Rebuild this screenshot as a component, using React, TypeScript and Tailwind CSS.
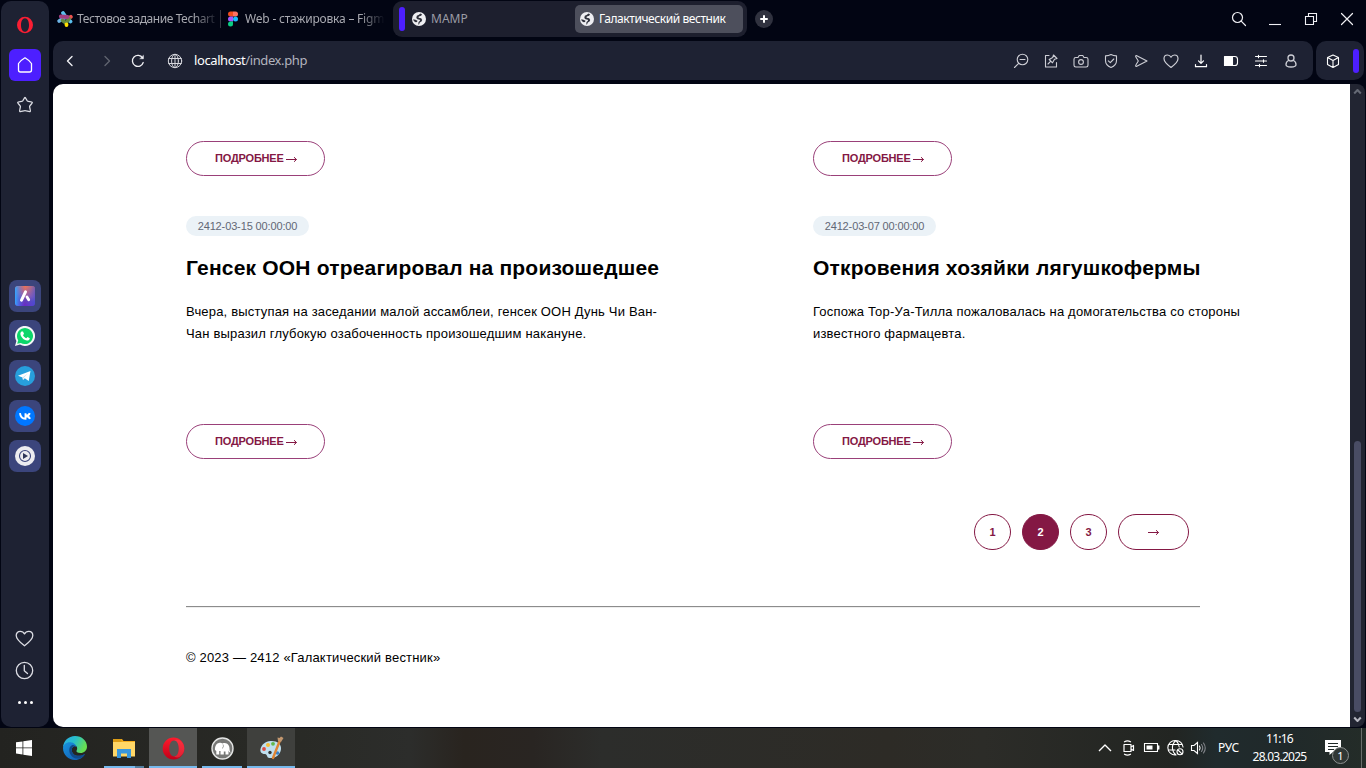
import type { ReactNode } from 'react';

const UI = "font-['Noto_Sans',sans-serif]";
const WEB = "font-['Liberation_Sans',Arial,sans-serif]";

function Icon({ size = 18, sw = 1.1, className = '', children }: { size?: number; sw?: number; className?: string; children: ReactNode }) {
  return (
    <svg width={size} height={size} viewBox={`0 0 ${size} ${size}`} fill="none" stroke="currentColor" strokeWidth={sw} strokeLinecap="round" strokeLinejoin="round" className={`block shrink-0 ${className}`}>
      {children}
    </svg>
  );
}

function OperaLogo({ size, flat }: { size: number; flat?: boolean }) {
  return (
    <svg width={size} height={size} viewBox="0 0 24 24" className="block shrink-0">
      <defs>
        <linearGradient id="operaRed" x1="0" y1="0" x2="0" y2="1">
          <stop offset="0" stopColor="#ff1b2d" />
          <stop offset="1" stopColor="#c00018" />
        </linearGradient>
      </defs>
      {flat ? (
        <path fill="#fa1e33" fillRule="evenodd" d="M12 3.8a8 8.2 0 1 0 0 16.4a8 8.2 0 1 0 0-16.4ZM12 5.200c2.600 0 4 3 4 6.800s-1.400 6.800-4 6.800s-4-3-4-6.800s1.400-6.800 4-6.800Z" />
      ) : (
        <>
          <path fill="url(#operaRed)" fillRule="evenodd" d="M12 .5a11.300 11.500 0 1 0 0 23a11.300 11.500 0 1 0 0-23ZM12.600 3.700c3 0 4.900 3.500 4.900 8.300s-1.900 8.300-4.900 8.300s-5-3.500-5-8.300s2-8.300 5-8.300Z" />
          <path fill="#ff4a55" d="M12.600 3.700c1.700-1.300 4-1.500 6-.2c3 2 4.700 5 4.700 8.500s-1.700 6.600-4.700 8.600c-2 1.200-4.300 1-6-.3c3 0 4.900-3.500 4.900-8.300s-1.900-8.300-4.900-8.300Z" opacity=".45" />
        </>
      )}
    </svg>
  );
}

function SiteGlobe() {
  return (
    <svg width="14" height="14" viewBox="0 0 14 14" className="block shrink-0">
      <circle cx="7" cy="7" r="7" fill="#eeeef2" />
      <path fill="#30323d" d="M8.500 1.400L10 2.200L9.200 3.800L6.800 4.500L6.500 5.800L9.200 6.200L10.200 8L9.500 9.500L7.800 10.500L7 12.500L6.300 12.500L6.500 10L8 8.800L7.800 7.800L5.500 7.200L4.300 6L4.800 3.800L6.500 3Z" />
      <path fill="#30323d" d="M1.200 7.200L3.500 7.800L5.500 8.800L5 10L3.800 10.300C2.200 9.500 1.300 8.500 1.200 7.200Z" />
    </svg>
  );
}

const G = 'text-[#cdced5]';
const tools: ReactNode[] = [
  <Icon className={G}><circle cx="10.500" cy="7.500" r="5.300" /><path d="M8 7.500h5M6.700 11.300L2.500 15.500" /></Icon>,
  <Icon className={G}><path d="M7 3.500H3.500v11.500h11V10.500" /><path d="M11.500 3L15 6.500L12.500 7.300L10.500 10.800L7.200 7.500L10.700 5.500ZM8.800 9.200L6 12" /></Icon>,
  <Icon className={G}><path d="M3.800 5.500H6l1.200-2h3.600l1.200 2h2.200c1 0 1.800.7 1.800 1.700v6.100c0 1-.8 1.700-1.800 1.700H3.800c-1 0-1.800-.7-1.800-1.700V7.200c0-1 .8-1.700 1.800-1.700Z" /><circle cx="9" cy="10" r="2.400" /></Icon>,
  <Icon className={G}><path d="M9 2.500c1.800 1.100 3.500 1.400 5.500 1.400v4.600c0 3.500-2.200 5.700-5.500 7c-3.300-1.300-5.500-3.500-5.500-7V3.900c2 0 3.700-.3 5.500-1.400Z" /><path d="M6.300 8.800L8.300 10.700L11.800 7" /></Icon>,
  <Icon className={G}><path d="M4.300 3.500L15 9L4.300 14.500C3.500 14.500 3.500 13.500 4 12.800L6.300 9L4 5.200C3.500 4.500 3.500 3.500 4.300 3.500Z" /></Icon>,
  <Icon className={G} sw={1.2}><path d="M9 15.500C5 12.500 2 10 2 6.800C2 4.500 3.600 3 5.500 3C7 3 8.300 3.800 9 5.200C9.700 3.800 11 3 12.500 3C14.400 3 16 4.500 16 6.800C16 10 13 12.500 9 15.500Z" /></Icon>,
  <Icon className="text-white" sw={1.2}><path d="M9 3v8M6.500 8.800L9 11.300L11.500 8.800M3.500 12.500v2.200h11v-2.200" /></Icon>,
  <Icon className="text-white"><rect x="2.500" y="4.500" width="8" height="9" fill="currentColor" /><path d="M10.500 4.500h2.300c1.800 0 2.700 1.300 2.700 2.800v3.400c0 1.500-.9 2.800-2.700 2.800H10.500" /></Icon>,
  <Icon className="text-white" sw={1.1}><path d="M3.500 4.500h11M3.500 9h11M3.500 13.500h11M6.500 3.300v2.400M11.500 7.800v2.400M7.500 12.300v2.400" /></Icon>,
  <Icon className={G} sw={1.3}><circle cx="9" cy="6" r="3" /><path d="M6.800 8.300C5 9.300 4 10.800 4 12.500c0 1.700 1.600 2.500 5 2.500s5-.8 5-2.500c0-1.700-1-3.200-2.800-4.200" /></Icon>,
];

function Messenger({ children }: { children: ReactNode }) {
  return (
    <div className="flex size-8 items-center justify-center rounded-lg bg-[#3b457c]">
      <svg width="20" height="20" viewBox="0 0 20 20">{children}</svg>
    </div>
  );
}

function Sidebar() {
  return (
    <aside className="ml-px mt-px flex h-[726px] w-12 shrink-0 flex-col items-center rounded-[10px] bg-[#1e2233] text-[#dcdde4]">
      <div className="mt-3 flex size-6 items-center justify-center"><OperaLogo size={24} flat /></div>
      <div className="mt-3 flex size-8 items-center justify-center rounded-md bg-[#4d1fff] text-white">
        <Icon sw={1.3}><path d="M9 1.800C6.500 3.300 4 5.300 2.500 7.500v6.500c0 1.200.7 2 2 2h9c1.300 0 2-.8 2-2V7.500C14 5.300 11.500 3.300 9 1.800Z" /></Icon>
      </div>
      <div className="mt-[15px]"><Icon sw={1.3}><path d="M9 1.500C9.700 1.500 10.600 4.300 11.400 5C12.500 5.700 15.800 5.600 16.300 6.400C16.600 7.300 13.900 9.200 13.600 10.400C13.500 11.700 14.900 14.800 14.200 15.500C13.400 16.100 10.500 14.700 9 14.700C7.500 14.700 4.600 16.100 3.800 15.500C3.100 14.800 4.500 11.700 4.400 10.400C4.100 9.200 1.400 7.300 1.700 6.400C2.200 5.600 5.500 5.700 6.600 5C7.400 4.300 8.300 1.500 9 1.500Z" /></Icon></div>
      <div className="mt-[166px] flex flex-col gap-2">
        <Messenger>
          <defs>
            <linearGradient id="aria" x1=".6" y1="0" x2=".4" y2="1"><stop offset="0" stopColor="#f47650" /><stop offset=".45" stopColor="#a55fa0" /><stop offset=".7" stopColor="#6440b8" /><stop offset="1" stopColor="#6a25c8" /></linearGradient>
            <linearGradient id="ariaSide" x1="0" x2="1"><stop offset="0" stopColor="#35a6ff" /><stop offset=".5" stopColor="#5060e0" stopOpacity="0" /><stop offset="1" stopColor="#4050d8" stopOpacity=".7" /></linearGradient>
          </defs>
          <rect width="20" height="20" rx="3" fill="url(#aria)" />
          <rect width="20" height="20" rx="3" fill="url(#ariaSide)" />
          <path d="M6.500 14.200L10.500 5.800" stroke="#fff" strokeWidth="3" strokeLinecap="round" /><path d="M12 11L13.700 13.800" stroke="#fff" strokeWidth="2.800" strokeLinecap="round" />
        </Messenger>
        <Messenger>
          <path d="M0 20L1.400 15A10 10 0 1 1 5 18.600Z" fill="#f4f6f7" />
          <path d="M2.200 17.800L3.200 14.300A8 8 0 1 1 5.800 16.900Z" fill="#0cd66a" />
          <path d="M6.500 5.500L8 5.400L9 7.800L8 9.200C8.800 10.700 9.900 11.600 11.300 12.200L12.500 11L14.800 12.200C14.700 14 13.300 14.700 12 14.600C8.800 14.200 5.800 11 5.400 8C5.300 7 5.800 6 6.500 5.500Z" fill="#fff" />
        </Messenger>
        <Messenger>
          <circle cx="10" cy="10" r="10" fill="#279fdc" />
          <path d="M3 9.800L15.500 5L13.700 15L9.800 12.300L8 14L7.500 11.400Z" fill="#fff" />
          <path d="M7.500 11.400L13 7.200L8.500 12L8 14Z" fill="#c5dff0" />
        </Messenger>
        <Messenger>
          <circle cx="10" cy="10" r="10" fill="#0077ff" />
          <path d="M5 7.200C5.400 10.800 6.800 12.800 10.500 12.800V7.200M14.800 7.200C14.200 8.800 12.600 9.900 10.700 10C12.700 10.200 14.400 11.300 15 12.800" fill="none" stroke="#fff" strokeWidth="1.900" />
        </Messenger>
        <Messenger>
          <circle cx="10" cy="10" r="10" fill="#ececf0" />
          <circle cx="10" cy="10" r="5.500" fill="none" stroke="#3b457c" strokeWidth="1.100" />
          <path d="M8 7L13 10L8 13Z" fill="#2e3659" />
        </Messenger>
      </div>
      <div className="mt-[156px]"><Icon size={20} sw={1.3}><path d="M9.500 17.800C4.500 14 1.200 11 1.200 7.500C1.200 5 2.900 3.300 5.200 3.300C7 3.300 8.700 4.300 9.500 5.900C10.300 4.300 12 3.300 13.800 3.300C16.100 3.300 17.800 5 17.800 7.500C17.800 11 14.500 14 9.500 17.800Z" /></Icon></div>
      <div className="mt-3"><Icon size={20} sw={1.3}><circle cx="9.500" cy="10.500" r="8.200" /><path d="M9.300 5.300V10.700L12.500 13.500" /></Icon></div>
      <div className="mt-[21px] flex gap-[3px]">
        <span className="size-[3px] rounded-full bg-white" /><span className="size-[3px] rounded-full bg-white" /><span className="size-[3px] rounded-full bg-white" />
      </div>
    </aside>
  );
}

const FADE = 'ml-[6px] w-[140px] whitespace-nowrap text-[#a8a9b0] [mask-image:linear-gradient(to_right,black_82%,transparent)]';

function TabBar() {
  return (
    <div className={`flex h-[41px] shrink-0 text-[12px] leading-[38px] ${UI}`}>
      <div className="flex w-[167px] items-start pl-1">
        <svg width="16" height="16" viewBox="0 0 16 16" className="mt-[11px] shrink-0">
          <path d="M6 2L9 6.500M13 10L13.500 10.500" stroke="#5bc0ee" strokeWidth="3.800" strokeLinecap="round" />
          <path d="M2.200 10L7 7" stroke="#6eb5e8" strokeWidth="3.800" strokeLinecap="round" />
          <path d="M13.800 5.800L12 7" stroke="#f0524f" strokeWidth="3.800" strokeLinecap="round" />
          <path d="M5.500 9.500L9 12M12 7.500L10.500 10" stroke="#648a40" strokeWidth="3.600" strokeLinecap="round" />
          <path d="M3.800 5.500L10.500 6" stroke="#a13f80" strokeWidth="3.800" strokeLinecap="round" />
          <path d="M9.500 13.500V14" stroke="#ffdf00" strokeWidth="3.800" strokeLinecap="round" />
        </svg>
        <div className="ml-1 w-[142px] whitespace-nowrap text-[#a8a9b0] [mask-image:linear-gradient(to_right,black_82%,transparent)]"><span className="tracking-[-0.43px]">Тестовое задание Techart</span></div>
      </div>
      <div className="mt-[10px] h-[18px] w-px bg-[#353743]" />
      <div className="flex w-[172px] items-start pl-[6px]">
        <svg width="12" height="16" viewBox="0 0 12 16" className="mt-[11px] shrink-0">
          <path d="M6 .5H3.500a2.500 2.500 0 0 0 0 5H6Z" fill="#f24e1e" /><path d="M6 .5h2.500a2.500 2.500 0 0 1 0 5H6Z" fill="#ff7262" />
          <path d="M6 5.500H3.500a2.500 2.500 0 0 0 0 5H6Z" fill="#a259ff" /><circle cx="8.500" cy="8" r="2.500" fill="#1abcfe" />
          <path d="M6 10.500H3.500a2.500 2.500 0 1 0 2.500 2.500Z" fill="#0acf83" />
        </svg>
        <div className={FADE}><span className="tracking-[-0.2px]">Web - стажировка – Figm</span></div>
      </div>
      <div className="mt-px flex h-9 w-[354px] rounded-[9px] bg-[#1d1f2e] leading-9">
        <span className="ml-[6px] mt-[6px] h-6 w-[6px] rounded-full bg-[#4d1fff]" />
        <div className="ml-[7px] mt-[11px]"><SiteGlobe /></div>
        <span className="ml-[5px] w-[144px] text-[#9b9ca5]">MAMP</span>
        <div className="mt-1 flex h-7 w-[168px] rounded-[5px] bg-[#4d4f5c] leading-7 text-white">
          <div className="ml-[5px] mt-[7px]"><SiteGlobe /></div>
          <span className="ml-[5px] whitespace-nowrap tracking-[-0.43px]">Галактический вестник</span>
        </div>
      </div>
      <div className="ml-2 mt-[10px] flex size-[18px] items-center justify-center rounded-full bg-[#30323f] text-white">
        <Icon size={10} sw={2}><path d="M5 2v6M2 5h6" /></Icon>
      </div>
      <div className="ml-auto flex items-start text-[#f0f0f4]">
        <Icon size={18} className="mr-[18px] mt-[10px]" sw={1.2}><circle cx="7.500" cy="7.500" r="5" /><path d="M11.200 11.200L15.500 15.500" /></Icon>
        <Icon size={18} className="mr-[18px] mt-[10px]" sw={1.1}><path d="M3 14.500h12" strokeLinecap="butt" /></Icon>
        <Icon size={18} className="mr-[18px] mt-[10px]"><path d="M3.500 6.500h8v8h-8ZM6.500 6V3.500h8v8H12" strokeLinejoin="miter" /></Icon>
        <Icon size={18} className="mr-[10px] mt-[10px]" sw={1.2}><path d="M3.500 3.500L14.500 14.500M14.500 3.500L3.500 14.500" /></Icon>
      </div>
    </div>
  );
}

function Toolbar() {
  return (
    <div className="flex h-[39px] shrink-0 gap-[3px]">
      <div className="flex w-[1260px] items-center rounded-[10px] bg-[#1e2233] pl-2 pr-[7px] text-[#f0f0f4]">
        <Icon sw={1.4}><path d="M11 4.500L6.500 9L11 13.500" /></Icon>
        <Icon sw={1.4} className="ml-[19px] text-[#60636f]"><path d="M7 4.500L11.500 9L7 13.500" /></Icon>
        <Icon sw={1.3} className="ml-[13px]"><path d="M13.600 6A5.500 5.500 0 1 0 14.200 10.500" /><path d="M11 6.800H14.500V3.500Z" fill="currentColor" strokeWidth=".4" /></Icon>
        <Icon sw={1} className="ml-[19px] text-[#d5d6dc]"><circle cx="9" cy="9" r="6.700" /><ellipse cx="9" cy="9" rx="3.400" ry="6.700" /><path d="M2.700 6.500h12.600M2.700 11.500h12.600M9 2.300v13.400" /></Icon>
        <div className={`ml-[10px] whitespace-nowrap text-[13px] tracking-[-0.4px] text-[#b2b4be] ${UI}`}><span className="text-white">localhost</span>/index.php</div>
        <div className="ml-auto flex">
          {tools.map((t, i) => <span key={i} className="flex w-[30px] justify-center">{t}</span>)}
        </div>
      </div>
      <div className="flex w-12 items-center rounded-[10px] bg-[#1e2233] pl-2 text-white">
        <Icon><path d="M9 3L14.500 5.500V12.500L9 15.500L3.500 12.500V5.500ZM3.500 5.500L9 8.500L14.500 5.500M9 8.500V15.500" /></Icon>
        <span className="ml-[11px] h-6 w-[6px] rounded-full bg-[#4d1fff]" />
      </div>
    </div>
  );
}

function Arrow() {
  return <Icon size={11} sw={1} className="mt-px"><path d="M0 5.500h10.500M8 3.200L10.500 5.500L8 7.800" strokeLinecap="butt" /></Icon>;
}

function MoreButton() {
  return (
    <a className="flex h-[35px] w-[139px] items-center gap-[3px] rounded-full border border-[#9a4079] pl-7 text-[11px] font-bold tracking-[-0.2px] text-[#841844]">
      <span className="w-[68px] whitespace-nowrap">ПОДРОБНЕЕ</span><Arrow />
    </a>
  );
}

function Card({ date, title, lines }: { date: string; title: string; lines: string[] }) {
  return (
    <article className="flex w-[627px] shrink-0 flex-col items-start">
      <MoreButton />
      <time className="mt-10 flex h-5 w-[123px] items-center justify-center rounded-full bg-[#ebf2f7] text-[11px] tracking-[-0.13px] text-[#626775]">{date}</time>
      <h2 className="mt-[19px] whitespace-nowrap text-[21px] font-bold leading-[26px] tracking-[0.19px] text-black">{title}</h2>
      <p className="mb-[79px] mt-5 text-[13px] leading-[22px] tracking-[0.18px] text-black">
        {lines.map((l) => <span key={l} className="block whitespace-nowrap">{l}</span>)}
      </p>
      <MoreButton />
    </article>
  );
}

function Page() {
  const circle = 'flex h-9 w-[37px] items-center justify-center rounded-full border border-[#841844]';
  return (
    <main className={`w-[1297px] overflow-hidden rounded-l-[10px] bg-white pl-[133px] pt-[57px] ${WEB}`}>
      <div className="flex">
        <Card date="2412-03-15 00:00:00" title="Генсек ООН отреагировал на произошедшее" lines={['Вчера, выступая на заседании малой ассамблеи, генсек ООН Дунь Чи Ван-', 'Чан выразил глубокую озабоченность произошедшим накануне.']} />
        <Card date="2412-03-07 00:00:00" title="Откровения хозяйки лягушкофермы" lines={['Госпожа Тор-Уа-Тилла пожаловалась на домогательства со стороны', 'известного фармацевта.']} />
      </div>
      <nav className="ml-[788px] mt-[55px] flex gap-[11px] text-[11px] font-bold text-[#841844]">
        <span className={circle}>1</span>
        <span className={`${circle} bg-[#841844] text-white`}>2</span>
        <span className={circle}>3</span>
        <span className="flex h-9 w-[71px] items-center justify-center rounded-full border border-[#841844]"><Arrow /></span>
      </nav>
      <hr className="mt-14 h-[2px] w-[1014px] border-b border-t border-b-[#eeeeee] border-t-[#8c8c8c]" />
      <footer className="mt-[39px] text-[13px] leading-[22px] tracking-[0.18px] text-black">© 2023 — 2412 «Галактический вестник»</footer>
    </main>
  );
}

function Scrollbar() {
  return (
    <div className="flex w-[15px] flex-col items-center rounded-r-[8px] bg-[#222532] text-[#666a75]">
      <Icon size={9} sw={2} className="mt-[3px]"><path d="M1.200 6.500L4.500 3L7.800 6.500" strokeLinecap="butt" /></Icon>
      <div className="mt-[345px] h-[271px] w-[7px] rounded bg-[#494c64]" />
      <Icon size={9} sw={2} className="mt-[3px] text-[#b5b6c0]"><path d="M1.200 2.500L4.500 6L7.800 2.500" strokeLinecap="butt" /></Icon>
    </div>
  );
}

function Task({ children, active, line }: { children: ReactNode; active?: 'full' | 'soft'; line?: boolean }) {
  const bg = active === 'full' ? 'bg-[#555654]' : active === 'soft' ? 'bg-[#3f403d]' : '';
  return (
    <div className={`flex h-10 w-12 flex-col items-center ${bg}`}>
      <div className="flex h-[38px] items-center pt-[2px]">{children}</div>
      {line && <div className={`h-[2px] bg-[#76b9ed] ${active ? 'w-12' : 'w-10'}`} />}
    </div>
  );
}

function Taskbar() {
  return (
    <div className={`mt-px flex h-10 shrink-0 bg-[linear-gradient(90deg,#232320_0%,#292a26_22%,#2c2d2b_30%,#29241f_34%,#292522_39%,#2c2d2b_44%,#2d2b26_65%,#2c2c28_72%,#222522_86%,#202b2d_89%,#20292a_94%,#242c28_100%)] text-white ${UI}`}>
      <Task><svg width="16" height="16" viewBox="0 0 16 16" fill="#fff"><path d="M0 2.300L6.500 1.400V7.500H0ZM7.300 1.300L16 0V7.500H7.300ZM0 8.300H6.500V14.500L0 13.600ZM7.300 8.300H16V16L7.300 14.700Z" /></svg></Task>
      <div className="ml-[3px] flex gap-px">
        <Task>
          <svg width="24" height="24" viewBox="0 0 24 24">
            <defs>
              <linearGradient id="e1" x1="0" x2="1" y2=".4"><stop stopColor="#2ba9e5" /><stop offset=".5" stopColor="#28bfcc" /><stop offset="1" stopColor="#67df52" /></linearGradient>
              <linearGradient id="e2" y2="1"><stop stopColor="#1893df" /><stop offset="1" stopColor="#1156ac" /></linearGradient>
            </defs>
            <path d="M0 11.500C.2 5 5.500 0 12 0c7 0 12 5 12 10.500c0 4-3 6.500-6.500 6.500c-3 0-4.500-1.300-4-2.300c1.200-1.500 1.200-5.700-3-5.700C5 6 2 7.500 0 11.500Z" fill="url(#e1)" />
            <path d="M0 12C.3 8 4 5.700 7.500 6.200C11 6.700 13.300 8.500 13.500 10.800C11 9 8.700 11.200 8.700 14c0 5 6.500 8 13.300 4C20 21.800 16.500 24 12 24C5.400 24 0 18.600 0 12Z" fill="url(#e2)" />
            <path d="M8.500 9.500C6 11 5.500 15 7.500 18.500C9.500 22 13.500 23 16.500 22.500C19 21.800 21 20 22 18C15.200 22 8.700 19 8.700 14C8.700 11.500 10.500 9.700 12 10C11 8.800 10 8.800 8.500 9.500Z" fill="#114a8b" />
          </svg>
        </Task>
        <div className="flex w-12 flex-col items-center">
          <div className="flex h-[38px] items-center pt-[2px]">
            <svg width="22" height="20" viewBox="0 0 22 20"><path d="M0 1h9l1.500 2H22v15H0Z" fill="#f5ad1d" /><path d="M0 4h22v14.500H0Z" fill="#ffd767" /><path d="M0 1h8.500v3H0Z" fill="#dd9d16" /><path d="M4 11h14v9h-4v-4.500H8V20H4Z" fill="#3997dc" /></svg>
          </div>
          <div className="flex h-[2px] w-10"><span className="w-[31px] bg-[#76b9ed]" /><span className="w-[9px] bg-[#527e9e]" /></div>
        </div>
        <Task active="full" line><OperaLogo size={23} /></Task>
        <Task line>
          <svg width="23" height="23" viewBox="0 0 23 23"><circle cx="11.500" cy="11.500" r="10.500" fill="#777876" stroke="#e3e4e3" strokeWidth="1.400" /><path d="M4 13C3.800 9.500 5 6.500 8 6C9.500 5.600 10.500 6 11.500 6.500C14 5.500 17 6.300 18 9C19 11.500 18 14 20 15.500L18.300 15.200L17.500 13.500V17.500H14.500V14.500H12.800V17.500H9.500V14H8.200V17.500H5.300V14Z" fill="#fff" /><path d="M12 7.500C12.800 9 12.500 10.500 11 11.500" fill="none" stroke="#777876" strokeWidth=".7" /></svg>
        </Task>
        <Task active="soft" line>
          <svg width="25" height="24" viewBox="0 0 25 24"><path d="M11.500 5C18 4.500 22.500 8 22 13c-.5 6-6 9.500-11.500 9c-3 0-2-3.800-4.500-4C2 18 1 15.500 1.500 13C2.500 8.500 6.500 5.500 11.500 5Z" fill="#bfdfef" /><circle cx="9" cy="9" r="2" fill="#f7bd37" /><circle cx="5" cy="13" r="1.900" fill="#de4c43" /><circle cx="14" cy="7.800" r="1.900" fill="#62b84c" /><circle cx="11" cy="16.500" r="1.700" fill="#333" /><circle cx="18.500" cy="17" r="1.800" fill="#3481c9" /><path d="M14 22L20.500 5.500" stroke="#de8434" strokeWidth="2.400" strokeLinecap="round" /><path d="M19 5L18.500 1.500L20.500 2L22 .5L24.500 2L22 6Z" fill="#c3976f" /></svg>
        </Task>
      </div>
      <div className="ml-auto flex items-center">
        <Icon size={14} sw={1.4} className="-ml-px text-white"><path d="M1 10L7 4L13 10" strokeLinecap="butt" /></Icon>
        <Icon size={16} sw={1.2} className="ml-[8px]"><path d="M4 4.500h7v7H4ZM11 7L13.500 5.500v5L11 9M4.500 1.800Q7.500 0 10.500 1.800M4.500 14.200Q7.500 16 10.500 14.200" /></Icon>
        <Icon size={18} sw={1.1} className="ml-[7px]"><path d="M1.500 4.500h13v8h-13Z" strokeLinejoin="miter" /><path d="M3.500 6.500h6v4h-6Z" fill="currentColor" stroke="none" /><path d="M15.700 7v3" strokeWidth="1.500" /></Icon>
        <Icon size={18} sw={1.1} className="ml-[6px]"><path d="M9 1.500A7.300 7.300 0 1 0 9 16M16 8A7 7 0 0 0 9 1.500C3.500 6 5 13 9 16M9 1.500C11.500 4 12 6 12.200 8M2.500 5.500h12.500M2 11h6" /><circle cx="13" cy="12.800" r="3" /><path d="M11 11L15 14.800" /></Icon>
        <Icon size={18} sw={1.1} className="ml-[5px]"><path d="M1.500 6.500h2.500L7.500 3.500v11L4 11.500H1.500Z" strokeLinejoin="miter" /><path d="M9.500 7Q10.700 9 9.500 11" /><path d="M11.500 5.500Q14 9 11.500 12.500M13.500 4Q17 9 13.500 14" stroke="#82858a" /></Icon>
        <span className="ml-[10px] w-[23px] whitespace-nowrap text-[12px] tracking-[-0.2px]">РУС</span>
        <div className="ml-[11px] w-[55px] whitespace-nowrap text-center text-[12px] leading-[18px] tracking-[-0.75px]"><div>11:16</div><div>28.03.2025</div></div>
        <svg width="26" height="26" viewBox="0 0 26 26" className="ml-[17px] mt-[7px]">
          <path d="M1 1h16v12H9l-3.500 3V13H1Z" fill="#fff" /><path d="M4 4.500h10M4 7.500h10M4 10.500h6" stroke="#202928" />
          <circle cx="16.500" cy="16.500" r="8" fill="#303735" stroke="#8d9190" /><text x="16.500" y="20.500" textAnchor="middle" fontSize="11" fontFamily="Noto Sans" fill="#fff">1</text>
        </svg>
        <div className="ml-[11px] mr-[4px] h-10 w-px bg-[#686d6a]" />
      </div>
    </div>
  );
}

export default function App() {
  return (
    <div className="flex h-[768px] w-[1366px] flex-col overflow-hidden bg-[#020513]">
      <div className="flex h-[727px] shrink-0">
        <Sidebar />
        <div className="ml-1 flex w-[1313px] flex-col">
          <TabBar />
          <Toolbar />
          <div className="mt-1 flex h-[643px]">
            <Page />
            <Scrollbar />
          </div>
        </div>
      </div>
      <Taskbar />
    </div>
  );
}
